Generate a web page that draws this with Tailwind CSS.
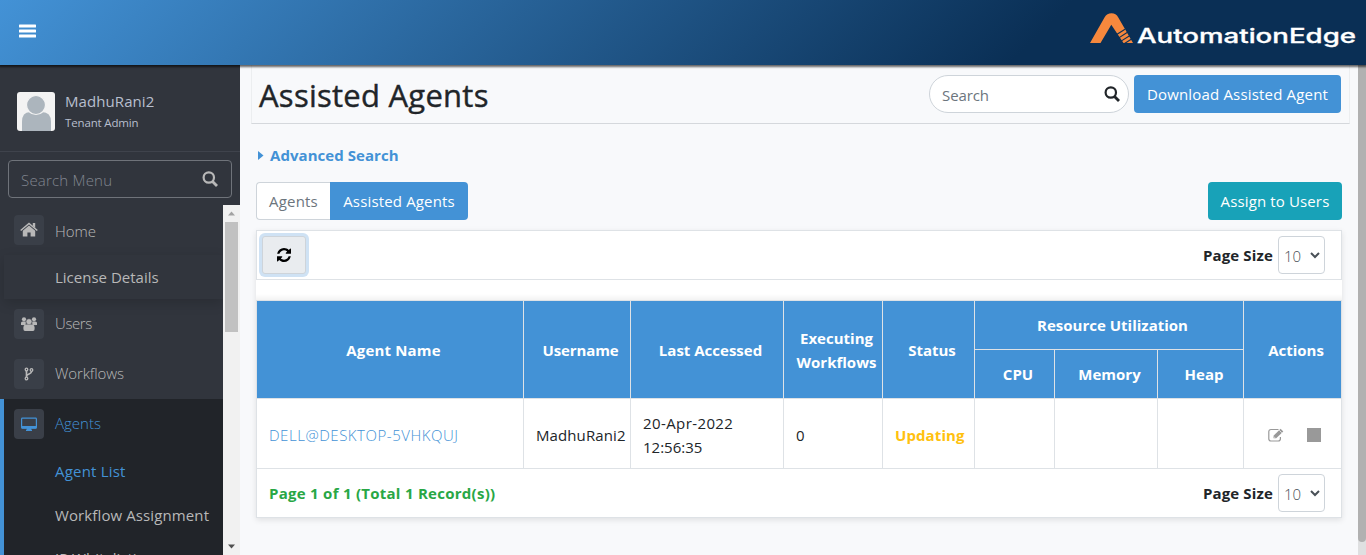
<!DOCTYPE html>
<html lang="en">
<head>
<meta charset="utf-8">
<title>Assisted Agents</title>
<script src="https://cdn.jsdelivr.net/npm/@tailwindcss/browser@4"></script>
</head>
<body class="h-[555px] w-[1366px] overflow-hidden bg-[#f8f9fb] font-['Open_Sans','Noto_Sans',sans-serif] text-[15px] leading-6 text-[#212529]">
<div class="flex h-[555px] flex-col">
  <header class="relative z-10 flex h-[65px] shrink-0 items-center justify-between bg-[linear-gradient(135deg,#4392d6_0%,#0a2f55_75%)] pr-[10px] pl-[19px] shadow-[0_1px_2px_1px_rgba(0,0,0,0.6)]">
    <svg class="mt-[-4px] h-[14px] w-[17px]" viewBox="0 0 17 14" fill="#fff"><rect y="0.5" width="17" height="3" rx=".6"/><rect y="5.5" width="17" height="3" rx=".6"/><rect y="10.5" width="17" height="3" rx=".6"/></svg>
    <svg class="h-[65px] w-[267px]" viewBox="1089 0 267 65">
      <path d="M1090 43 L1104.500 17.500 Q1107 13.300 1111.500 13.300 Q1116 13.300 1118.300 17.500 L1133 43 H1123.500 L1111.300 24.800 L1100.500 43Z" fill="#f6883d"/>
      <path d="M1115.500 35.200 L1125 29.200 M1118 38.400 L1127.500 32.200 M1120.300 41.600 L1130 35.500 M1123 44.500 L1132 38.800" stroke="#0a2f55" stroke-width="1.100"/>
      <text x="1137" y="43" font-family="Inter" font-size="19.500" font-weight="500" fill="#fff" stroke="#fff" stroke-width=".3" textLength="219" lengthAdjust="spacingAndGlyphs">AutomationEdge</text>
    </svg>
  </header>

  <div class="flex min-h-0 flex-1">
    <aside class="flex w-[240px] shrink-0 flex-col bg-[#31353d]">
      <div class="flex h-[87px] shrink-0 gap-[10px] border-b border-[#3f434c] pt-[27px] pl-[17px] text-[#b8bfce]">
        <svg class="h-[39px] w-[38px] rounded-[3px] bg-[#f3f3f3]" viewBox="0 0 38 39" fill="#acb5bd"><path d="M5 39V30Q5 20 13 20H25Q34 20 34 30V39Z"/><circle cx="19" cy="13" r="9.500" stroke="#f3f3f3" stroke-width="1.200"/></svg>
        <div class="-mt-[3px]">
          <div class="h-6 tracking-[0.08px]"><span>MadhuRani2</span></div>
          <div class="h-5 text-[11.500px] leading-5 tracking-[-0.15px]"><span>Tenant Admin</span></div>
        </div>
      </div>
      <div class="mx-2 mt-2 flex h-[38px] shrink-0 items-center justify-between rounded-[4px] border border-[#6f737a] pr-[13px] pl-3 text-[#818690]">
        <span class="mt-0.5 font-light tracking-[0.2px]">Search Menu</span>
        <svg class="h-4 w-4" viewBox="0 0 16 16" fill="none" stroke="#b8b8b8" stroke-width="2.200"><circle cx="6.800" cy="6.500" r="5.200"/><path d="M10.500 10.500L15 15" stroke-width="2.800"/></svg>
      </div>
      <nav class="mt-[7px] flex min-h-0 flex-1 font-light text-[#b8b8b8]">
        <div class="w-[223px] overflow-hidden">
          <div class="flex h-[50px] items-center gap-[11px] pl-[14px]">
            <div class="flex h-[30px] w-[30px] items-center justify-center rounded bg-[#3a3f48]"><svg class="h-4 w-[18px]" viewBox="0 0 18 16" fill="#b8b8b8"><path d="M9 3.500L2.800 8.700V14.500H7.400V10.500H10.600V14.500H15.200V8.700Z"/><path d="M.7 8.500L9 1.500L17.300 8.500" fill="none" stroke="#b8b8b8" stroke-width="1.600"/><path d="M12.800 1H15.200V6L12.800 4Z"/></svg></div>
            <span class="mt-0.5">Home</span>
          </div>
          <div class="ml-1 flex h-[44px] items-center pl-[51px] font-normal shadow-[0_4px_12px_rgba(0,0,0,0.16)]"><span>License Details</span></div>
          <div class="flex h-[50px] items-center gap-[11px] pl-[14px]">
            <div class="flex h-[30px] w-[30px] items-center justify-center rounded bg-[#3a3f48]"><svg class="h-4 w-4" viewBox="0 0 16 16" fill="#b8b8b8"><circle cx="3" cy="3.300" r="2.100"/><circle cx="13" cy="3.300" r="2.100"/><path d="M0 9V7Q0 5.500 1.500 5.500H5L4.500 9.300ZM16 9V7Q16 5.500 14.500 5.500H11L11.500 9.300Z"/><circle cx="8" cy="5.700" r="3" stroke="#3a3f48" stroke-width=".5"/><path d="M2.400 13V11Q2.600 8.500 5 8.500H11Q13.400 8.500 13.600 11V13Q13.600 15 12 15H4Q2.400 15 2.400 13Z"/></svg></div>
            <span class="mb-0.5 tracking-[-0.4px]">Users</span>
          </div>
          <div class="flex h-[50px] items-center gap-[11px] pl-[14px]">
            <div class="flex h-[30px] w-[30px] items-center justify-center rounded bg-[#3a3f48]"><svg class="h-[14px] w-[10px]" viewBox="0 0 10 14" fill="none" stroke="#b8b8b8" stroke-width="1.300"><circle cx="2.500" cy="2.500" r="1.300"/><circle cx="2.500" cy="11.500" r="1.300"/><circle cx="7.500" cy="3" r="1.300"/><path d="M2.500 4V10M7.500 4.500C7.500 7.500 2.500 6.500 2.500 9.500" stroke-width="1.700"/></svg></div>
            <span class="mb-0.5 tracking-[-0.1px]">Workflows</span>
          </div>
          <div class="h-[160px] border-l-4 border-[#4392d6] bg-[#212429]">
            <div class="flex h-[50px] items-center gap-[11px] pl-[10px] text-[#4392d6]">
              <div class="flex h-[30px] w-[30px] items-center justify-center rounded bg-[#3a3f48]"><svg class="h-[14px] w-4" viewBox="0 0 16 14"><rect x=".6" y="1.100" width="14.800" height="10" rx=".8" fill="none" stroke="#4392d6" stroke-width="1.200"/><path d="M.5 9H15.500V11.500H.5ZM6 11H10V12.500H11V14H5V12.500H6Z" fill="#4392d6"/></svg></div>
              <span class="mb-0.5">Agents</span>
            </div>
            <div class="flex h-11 items-center pl-[51px] font-normal tracking-[0.2px] text-[#4392d6]"><span>Agent List</span></div>
            <div class="flex h-11 items-center pl-[51px] font-normal tracking-[0.11px]"><span>Workflow Assignment</span></div>
            <div class="flex h-11 items-center pl-[51px] font-normal"><span class="-mt-0.5">IP Whitelisting</span></div>
          </div>
        </div>
        <div class="flex w-[17px] flex-col items-center justify-between bg-[#f1f1f1] pt-[6px] pb-[6px]">
          <svg class="h-[5px] w-[7px] shrink-0" viewBox="0 0 7 5" fill="#a3a3a3"><path d="M3.500 .5L7 4.500H0Z"/></svg>
          <div class="mt-[6px] h-[110px] w-[13px] bg-[#c1c1c1]"></div>
          <div class="flex-1"></div>
          <svg class="h-[5px] w-[7px] shrink-0" viewBox="0 0 7 5" fill="#505050"><path d="M3.500 4.500L7 .5H0Z"/></svg>
        </div>
      </nav>
    </aside>

    <main class="flex min-w-0 flex-1 flex-col pr-[9px] pl-[11px]">
      <div class="flex h-[59px] w-[1099px] shrink-0 items-start justify-between border-x border-b border-x-[#eceef0] border-b-[#d5d8dc] pt-[10px] pr-[8px] pl-[7px]">
        <h1 class="mt-px text-[31px] leading-[38px] font-medium tracking-[0.25px] [-webkit-text-stroke:0.4px_#212529]"><span>Assisted Agents</span></h1>
        <div class="flex gap-[5px]">
          <div class="flex h-[38px] w-[200px] items-center justify-between rounded-full border border-[#ced4da] bg-white pr-2 pl-3 text-[#6c757d]">
            <span class="mt-0.5 tracking-[-0.1px]">Search</span>
            <svg class="h-4 w-4" viewBox="0 0 16 16" fill="none" stroke="#212529" stroke-width="2.200"><circle cx="6.800" cy="6.500" r="5.200"/><path d="M10.500 10.500L15 15" stroke-width="2.800"/></svg>
          </div>
          <div class="flex h-[38px] w-[207px] items-center justify-center rounded-[4px] bg-[#4392d6] tracking-[0.18px] text-white"><span>Download Assisted Agent</span></div>
        </div>
      </div>

      <div class="mt-[19px] flex h-6 shrink-0 items-center gap-[6px] pl-[7px] font-bold tracking-[0.05px] text-[#4392d6]">
        <svg class="h-[9px] w-[6px]" viewBox="0 0 6 9" fill="#4392d6"><path d="M0 0L5.500 4.500L0 9Z"/></svg>
        <span>Advanced Search</span>
      </div>

      <div class="mt-[15px] ml-[5px] flex h-[38px] w-[1086px] shrink-0 justify-between">
        <div class="flex">
          <div class="flex w-[74px] items-center justify-center rounded-l-[4px] border border-r-0 border-[#ced4da] bg-white tracking-[0.2px] text-[#6c757d]"><span>Agents</span></div>
          <div class="flex w-[138px] items-center justify-center rounded-r-[4px] bg-[#4392d6] tracking-[0.15px] text-white"><span>Assisted Agents</span></div>
        </div>
        <div class="flex w-[134px] items-center justify-center rounded-[4px] bg-[#18a2b8] tracking-[0.13px] text-white"><span>Assign to Users</span></div>
      </div>

      <div class="mt-[10px] ml-[5px] w-[1086px] shrink-0 bg-white shadow-[0_2px_6px_rgba(0,0,0,0.1)]">
        <div class="flex h-[50px] items-center justify-between border border-[#dee2e6] pr-4 pl-[5px]">
          <div class="flex h-[38px] w-[44px] items-center justify-center rounded-[3px] border border-[#ced4da] bg-[#e9ecef] shadow-[0_0_0_3px_#cfe2f4]">
            <svg class="h-[14px] w-[14px]" viewBox="0 0 1536 1536" fill="#000"><path d="M1511 928q0 5-1 7-64 268-268 434.500T764 1536q-146 0-282.500-55T238 1324l-129 129q-19 19-45 19t-45-19-19-45V960q0-26 19-45t45-19h448q26 0 45 19t19 45-19 45l-137 137q71 66 161 102t187 36q134 0 250-65t186-179q11-17 53-117 8-23 30-23h192q13 0 22.500 9.500t9.500 22.500zm25-800v448q0 26-19 45t-45 19h-448q-26 0-45-19t-19-45 19-45l138-138Q969 256 768 256q-134 0-250 65T332 500q-11 17-53 117-8 23-30 23H50q-13 0-22.500-9.500T18 608v-7q65-268 270-434.500T768 0q146 0 284 55.500T1297 212l130-129q19-19 45-19t45 19 19 45z"/></svg>
          </div>
          <div class="flex items-center gap-[5px]"><span class="font-bold tracking-[0.15px]">Page Size</span>
            <div class="flex h-[38px] w-[47px] items-center justify-between rounded-[4px] border border-[#ced4da] pr-[4px] pl-[5px] font-light text-[#495057]"><span class="mt-0.5">10</span><svg class="h-[7px] w-[10px]" viewBox="0 0 10 7" fill="none" stroke="#495057" stroke-width="2"><path d="M1 1L5 5L9 1"/></svg></div>
          </div>
        </div>
        <div class="h-[20px] bg-[linear-gradient(#fff_70%,#f3f3f3)]"></div>
        <table class="w-[1086px] table-fixed border-collapse [&_td]:border [&_td]:border-[#dee2e6] [&_td]:pl-3 [&_th]:border [&_th]:border-[#dee2e6] [&_th]:pl-[7px]">
          <colgroup><col class="w-[267px]"><col class="w-[107px]"><col class="w-[153px]"><col class="w-[99px]"><col class="w-[92px]"><col class="w-[80px]"><col class="w-[103px]"><col class="w-[86px]"><col class="w-[98px]"></colgroup>
          <thead class="bg-[#4392d6] font-bold text-white">
            <tr class="h-[49px]"><th rowspan="2" class="tracking-[0.15px]"><span>Agent Name</span></th><th rowspan="2" class="tracking-[-0.1px]"><span>Username</span></th><th rowspan="2"><span>Last Accessed</span></th><th rowspan="2"><span>Executing</span><br><span>Workflows</span></th><th rowspan="2"><span>Status</span></th><th colspan="3"><span>Resource Utilization</span></th><th rowspan="2"><span>Actions</span></th></tr>
            <tr class="h-[49px]"><th><span>CPU</span></th><th><span>Memory</span></th><th><span>Heap</span></th></tr>
          </thead>
          <tbody>
            <tr class="h-[70px]">
              <td class="pt-[3px] font-light tracking-[0.53px] text-[#4392d6]"><span>DELL@DESKTOP-5VHKQUJ</span></td>
              <td class="pt-[3px] tracking-[0.1px]"><span>MadhuRani2</span></td>
              <td class="pt-[3px]"><span class="tracking-[0.4px]">20-Apr-2022</span><br><span>12:56:35</span></td>
              <td class="pt-[3px]"><span>0</span></td>
              <td class="pt-[3px] font-bold tracking-[0.1px] text-[#ffc10f]"><span>Updating</span></td>
              <td></td><td></td><td></td>
              <td><div class="flex items-center gap-[23px] pt-[2px] pl-[12px]">
                <svg class="h-[14px] w-4" viewBox="0 0 16 14" fill="none" stroke="#999" stroke-width="1.200"><path d="M10.500 1.500H3Q.8 1.500 .8 3.700V10.800Q.8 13 3 13H10.200Q12.400 13 12.400 10.800V9"/><path d="M5.500 10.300V7.800L12.600 .7L15.300 3.400L8.200 10.300Z" fill="#999" stroke="none"/><path d="M11.200 2.200L13.800 4.800M7 9.800L6 8.700" stroke="#fff" stroke-width=".7"/></svg>
                <div class="h-[14px] w-[14px] bg-[#999]"></div></div></td>
            </tr>
          </tbody>
        </table>
        <div class="flex h-[49px] items-center justify-between border border-t-0 border-[#dee2e6] pr-4 pl-3">
          <span class="font-bold tracking-[0.27px] text-[#28a745]">Page 1 of 1 (Total 1 Record(s))</span>
          <div class="flex items-center gap-[5px]"><span class="font-bold tracking-[0.15px]">Page Size</span>
            <div class="flex h-[38px] w-[47px] items-center justify-between rounded-[4px] border border-[#ced4da] pr-[4px] pl-[5px] font-light text-[#495057]"><span class="mt-0.5">10</span><svg class="h-[7px] w-[10px]" viewBox="0 0 10 7" fill="none" stroke="#495057" stroke-width="2"><path d="M1 1L5 5L9 1"/></svg></div>
          </div>
        </div>
      </div>
    </main>
    <div class="w-2 bg-[#dfe0e1]"><div class="h-[477px] rounded-b bg-[#b1b1b1]"></div></div>
  </div>
</div>
</body>
</html>
